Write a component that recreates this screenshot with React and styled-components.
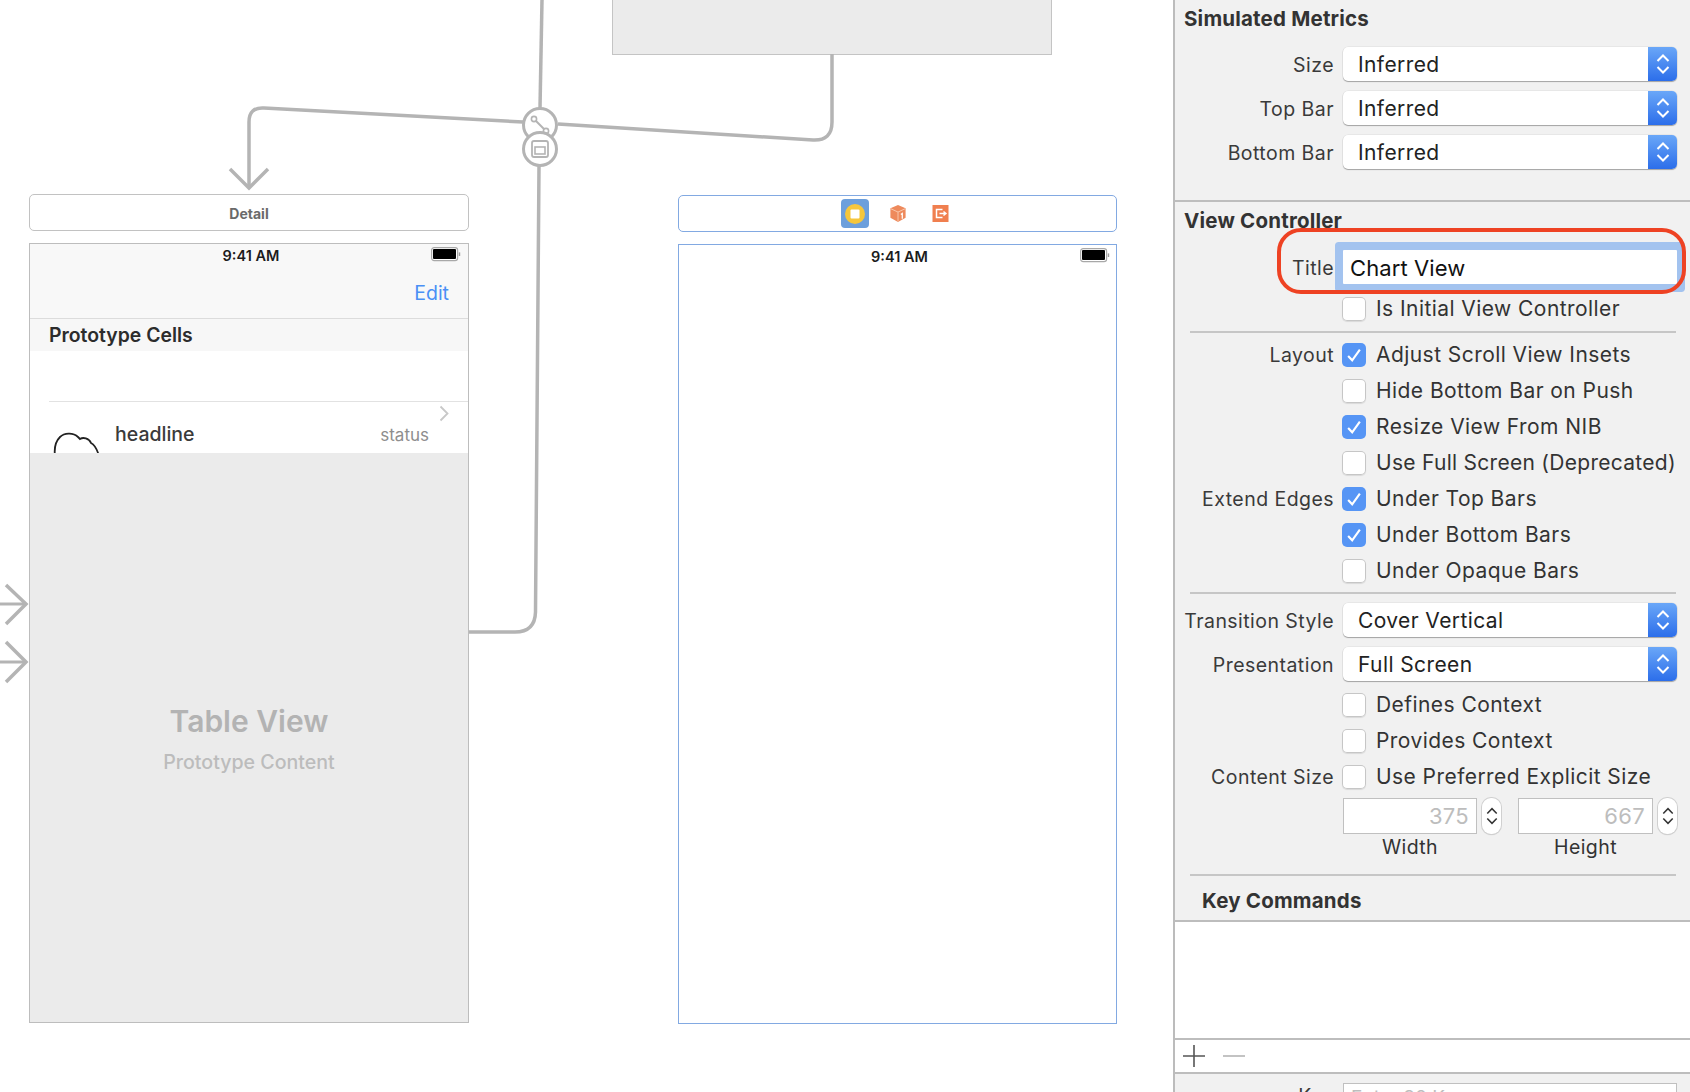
import React from 'react';
import styled, { createGlobalStyle } from 'styled-components';

const Global = createGlobalStyle`
  html, body { margin: 0; padding: 0; background: #fff; }
  body { font-family: Inter, "Open Sans", "Liberation Sans", sans-serif; }
  #root { width: 1690px; height: 1092px; overflow: hidden; }
  * { box-sizing: border-box; }
`;

const Page = styled.div`
  display: flex;
  width: 1690px;
  height: 1092px;
  overflow: hidden;
`;

/* ---------- free canvas ---------- */
const Canvas = styled.div`
  position: relative;
  width: 1173px;
  flex: none;
  background: #fff;
`;

const Wires = styled.svg`
  position: absolute;
  inset: 0;
  width: 1173px;
  height: 1092px;
`;

const GreyBlock = styled.div`
  position: absolute;
  left: 612px;
  top: -2px;
  width: 440px;
  height: 57px;
  background: #ebebeb;
  border: 1px solid #c4c4c4;
`;

const TitleBar = styled.div`
  position: absolute;
  left: ${p => p.$left}px;
  top: ${p => p.$top}px;
  width: ${p => p.$width}px;
  height: 37px;
  border: 1px solid ${p => (p.$selected ? '#82a9e2' : '#c2c2c2')};
  border-radius: 5px;
  background: #fff;
  display: flex;
  align-items: center;
  justify-content: center;
`;

const SceneName = styled.span`
  font-size: 14px;
  font-weight: 700;
  color: #6a6a6a;
  position: relative;
  top: 1px;
`;

const Scene = styled.div`
  position: absolute;
  left: ${p => p.$left}px;
  top: ${p => p.$top}px;
  width: ${p => p.$width}px;
  height: 780px;
  display: flex;
  flex-direction: column;
  background: #fff;
  border: 1px solid ${p => (p.$selected ? '#82a9e2' : '#bdbdbd')};
`;

const NavBar = styled.div`
  height: 75px;
  flex: none;
  background: ${p => (p.$plain ? '#fff' : '#f8f8f8')};
  border-bottom: 1px solid ${p => (p.$plain ? 'transparent' : '#dcdcdc')};
  display: flex;
  flex-direction: column;
`;

const StatusBar = styled.div`
  position: relative;
  height: 22px;
  display: flex;
  align-items: center;
  justify-content: center;
  padding-left: 4px;
`;

const Time = styled.span`
  font-size: 14.5px;
  font-weight: 600;
  color: #1c1c1c;
`;

const BatteryIcon = styled.svg`
  position: absolute;
  right: ${p => (p.$plain ? '6px' : '7px')};
  top: 3px;
`;

const NavActions = styled.div`
  display: flex;
  justify-content: flex-end;
  padding: 15px 19px 0 0;
`;

const EditLink = styled.span`
  color: #4a90f5;
  font-size: 19.5px;
  line-height: 24px;
`;

const SectionHeader = styled.div`
  height: 32px;
  flex: none;
  background: #f7f7f7;
  padding-left: 19px;
  display: flex;
  align-items: center;
  font-size: 19.4px;
  font-weight: 600;
  color: #2c2c2c;
`;

const BlankCell = styled.div`
  height: 51px;
  flex: none;
  background: #fff;
  margin-left: 19px;
  border-bottom: 1px solid #e2e2e2;
`;

const Cell = styled.div`
  position: relative;
  height: 51px;
  flex: none;
  display: flex;
  overflow: hidden;
  background: #fff;
  padding: 19px 0 0 85px;
`;

const CloudIcon = styled.svg`
  position: absolute;
  left: 23px;
  top: 30px;
`;

const Headline = styled.span`
  font-size: 19.5px;
  font-weight: 500;
  line-height: 26px;
  color: #3a3a3a;
`;

const CellStatus = styled.span`
  margin-left: auto;
  margin-right: 39px;
  margin-top: 2px;
  font-size: 17px;
  line-height: 24px;
  color: #8e8e8e;
`;

const CellChevron = styled.svg`
  position: absolute;
  right: 19px;
  top: 3px;
`;

const TablePlaceholder = styled.div`
  flex: 1;
  background: #ebebeb;
  display: flex;
  flex-direction: column;
  align-items: center;
  padding-top: 250px;
`;

const TableTitle = styled.div`
  font-size: 30px;
  font-weight: 600;
  line-height: 36px;
  color: #b3b3b3;
`;

const TableSub = styled.div`
  margin-top: 11px;
  font-size: 19.6px;
  font-weight: 500;
  line-height: 24px;
  color: #bcbcbc;
`;

const IconSlot = styled.div`
  width: 43px;
  display: flex;
  align-items: center;
  justify-content: center;
`;

const IconSelected = styled.div`
  width: 28px;
  height: 29px;
  border-radius: 4px;
  background: #6c9fdc;
  display: flex;
  align-items: center;
  justify-content: center;
`;

const IconSvg = styled.svg`
  display: block;
`;

/* ---------- inspector ---------- */
const Inspector = styled.aside`
  flex: 1;
  min-width: 0;
  background: #f1f1f1;
  border-left: 2px solid #bcbcbc;
  display: flex;
  flex-direction: column;
  color: #333;
  font-size: 20px;
`;

const Section = styled.section`
  flex: none;
  height: ${p => p.$height}px;
  padding: 0 13px 0 10px;
  border-bottom: ${p => (p.$rule ? '2px solid #bdbdbd' : 'none')};
`;

const Heading = styled.h3`
  margin: 0 0 0 -1px;
  height: ${p => p.$height || 36}px;
  display: flex;
  align-items: center;
  padding-left: ${p => p.$indent || 0}px;
  font-size: 20.5px;
  font-weight: 700;
  letter-spacing: 0.2px;
  color: #333;
`;

const Row = styled.div`
  display: grid;
  grid-template-columns: 149px minmax(0, 1fr);
  column-gap: 9px;
  align-items: center;
  height: ${p => p.$height || 34}px;
  margin-top: ${p => p.$top || 0}px;
`;

const Label = styled.label`
  text-align: right;
  white-space: nowrap;
  font-size: 19.5px;
  line-height: 24px;
  letter-spacing: 0.45px;
  color: #3a3a3a;
  justify-self: end;
  margin-top: ${p => (p.$nudge ? '2px' : '0')};
`;

const SelectBox = styled.div`
  height: 34px;
  border-radius: 5px;
  background: #fff;
  box-shadow: 0 0 0 0.5px rgba(0, 0, 0, 0.08), 0 1px 1px rgba(0, 0, 0, 0.3);
  display: flex;
  align-items: center;
  justify-content: space-between;
  padding-left: 15px;
  font-size: 21px;
  letter-spacing: 0.4px;
  color: #222;
  overflow: hidden;
`;

const SelectArrows = styled.div`
  width: 29px;
  height: 34px;
  flex: none;
  background: linear-gradient(#6aa7f8, #2c6eea);
  display: flex;
  align-items: center;
  justify-content: center;
`;

const TitleField = styled.div`
  position: relative;
  height: 34px;
  background: #fff;
  box-shadow: 0 0 0 8px #a3c3ef;
  border-radius: 1px;
  padding: 1px 0 0 7px;
  display: flex;
  align-items: center;
  font-size: 22px;
  letter-spacing: 0.1px;
  color: #111;
`;

const Callout = styled.div`
  position: absolute;
  left: -66px;
  top: -22px;
  width: 409px;
  height: 66px;
  border: 4px solid #ee4223;
  border-radius: 24px;
  pointer-events: none;
`;

const CheckRow = styled.div`
  display: flex;
  align-items: center;
  gap: 10px;
  margin-left: -1px;
  font-size: 21px;
  letter-spacing: ${p => (p.$tight ? '0.28px' : '0.44px')};
  color: #333;
  white-space: nowrap;
`;

const Box = styled.span`
  width: 24px;
  height: 24px;
  flex: none;
  border-radius: 5px;
  display: flex;
  align-items: center;
  justify-content: center;
  background: ${p => (p.$on ? '#5695f5' : '#fff')};
  box-shadow: ${p => (p.$on ? 'none' : 'inset 0 0 0 1px #c6c6c6, 0 1px 1px rgba(0,0,0,.1)')};
`;

const Rule = styled.hr`
  margin: ${p => p.$top || 0}px 0 0 5px;
  width: 486px;
  height: 2px;
  border: 0;
  background: #c6c6c6;
`;

const SizeFields = styled.div`
  display: flex;
  align-items: flex-start;
`;

const SizeColumn = styled.div`
  display: flex;
  flex-direction: column;
  margin-right: ${p => p.$gap || 0}px;
`;

const SizeControls = styled.div`
  display: flex;
  gap: 5px;
`;

const NumberField = styled.div`
  width: ${p => p.$width}px;
  height: 36px;
  background: #fff;
  border: 1px solid #c0c0c0;
  display: flex;
  align-items: center;
  justify-content: flex-end;
  padding: 1px 7px 0 0;
  font-size: 22px;
  letter-spacing: 0.3px;
  color: #bdbdbd;
`;

const Stepper = styled.div`
  width: 19px;
  height: 36px;
  background: #fff;
  border-radius: 9px;
  box-shadow: 0 0 0 1px #d0d0d0, 0 1px 1px rgba(0, 0, 0, 0.2);
  display: flex;
  align-items: center;
  justify-content: center;
`;

const SizeCaption = styled.div`
  width: ${p => p.$width}px;
  text-align: center;
  font-size: 19.5px;
  line-height: 24px;
  letter-spacing: 0.4px;
  margin-top: 1px;
  color: #333;
`;

const ListArea = styled.div`
  flex: none;
  height: 118px;
  background: #fff;
  border-top: 2px solid #bdbdbd;
`;

const ListBar = styled.div`
  flex: none;
  height: 36px;
  background: #fff;
  border-top: 2px solid #bdbdbd;
  border-bottom: 2px solid #bdbdbd;
  display: flex;
  align-items: center;
  padding-left: 8px;
  gap: 18px;
`;

const KeySection = styled.div`
  padding: 9px 13px 0 10px;
`;

const KeyField = styled.div`
  height: 34px;
  background: #fff;
  border: 1px solid #c0c0c0;
  padding: 2px 0 0 7px;
  font-size: 19px;
  line-height: 24px;
  color: #bdbdbd;
`;

const KeyLabel = styled(Label)`
  align-self: start;
  margin-top: 1px;
`;

/* ---------- small drawings ---------- */
const Battery = ({ plain }) => (
  <BatteryIcon $plain={plain} width="30" height="15" viewBox="0 0 30 15">
    <rect x="0.6" y="0.6" width="26" height="13" rx="2.6" fill="#fff" stroke="#a8a8a8" strokeWidth="1.2" />
    <rect x="2" y="2" width="23" height="10" rx="1" fill="#000" />
    <rect x="27.8" y="5.4" width="1.4" height="3.6" fill="#9c9c9c" />
  </BatteryIcon>
);

const Updown = ({ w = 14, h = 22, color = '#fff', sw = 2 }) => (
  <svg width={w} height={h} viewBox="0 0 14 22" fill="none" stroke={color} strokeWidth={sw}>
    <path d="M1.5 8 7 2.5 12.5 8" />
    <path d="M1.5 14 7 19.5 12.5 14" />
  </svg>
);

const Select = ({ children }) => (
  <SelectBox>
    {children}
    <SelectArrows>
      <Updown />
    </SelectArrows>
  </SelectBox>
);

const Check = ({ on, tight, children }) => (
  <CheckRow $tight={tight}>
    <Box $on={on}>
      {on && (
        <svg width="16" height="16" viewBox="0 0 15 15" fill="none" stroke="#fff" strokeWidth="2">
          <path d="M2 8.5 5.8 12.5 13 2.5" />
        </svg>
      )}
    </Box>
    {children}
  </CheckRow>
);

export default function App() {
  return (
    <Page>
      <Global />
      <Canvas>
        <GreyBlock />
        <Wires viewBox="0 0 1173 1092" fill="none">
          <g stroke="#b4b4b4" strokeWidth="3.5">
            <path d="M832 54V122Q832 141 813 140L558 124" />
            <path d="M523 122 264 108Q249 107 249 122V186" />
            <path d="M230 169 249 188 268 169" />
            <path d="M542 0 540 108" />
            <path d="M539 166 535.5 612Q535 632 515 632H469" />
            <path d="M0 604H26" strokeWidth="3" />
            <path d="M6 585 26 604 6 624" />
            <path d="M0 662H26" strokeWidth="3" />
            <path d="M6 642 26 662 6 682" />
          </g>
          <g stroke="#b4b4b4" strokeWidth="3" fill="#fff">
            <circle cx="540" cy="125" r="16.5" />
            <circle cx="540" cy="149" r="16.5" />
          </g>
          <g stroke="#b4b4b4" fill="none">
            <circle cx="534" cy="119" r="2.6" strokeWidth="1.6" />
            <circle cx="546" cy="131" r="2.6" strokeWidth="1.6" />
            <path d="M536 121 544 129" strokeWidth="2" />
            <rect x="532" y="141" width="16" height="16" rx="2" strokeWidth="1.8" />
            <rect x="535" y="147" width="10" height="7" strokeWidth="1.6" />
          </g>
        </Wires>

        <TitleBar $left={29} $top={194} $width={440}>
          <SceneName>Detail</SceneName>
        </TitleBar>
        <Scene $left={29} $top={243} $width={440}>
          <NavBar>
            <StatusBar>
              <Time>9:41 AM</Time>
              <Battery />
            </StatusBar>
            <NavActions>
              <EditLink>Edit</EditLink>
            </NavActions>
          </NavBar>
          <SectionHeader>Prototype Cells</SectionHeader>
          <BlankCell />
          <Cell>
            <CloudIcon width="50" height="24" viewBox="0 0 50 24" fill="none" stroke="#222" strokeWidth="1.8">
              <path d="M2 24C1 16 3 9 7 5 11 1 20 0 25 5L27 7C30 5 36 6 38 11 42 13 44 17 46 24" />
            </CloudIcon>
            <Headline>headline</Headline>
            <CellStatus>status</CellStatus>
            <CellChevron width="10" height="17" viewBox="0 0 10 17" fill="none" stroke="#c8c8c8" strokeWidth="1.8">
              <path d="M1.5 1.5 8.5 8.5 1.5 15.5" />
            </CellChevron>
          </Cell>
          <TablePlaceholder>
            <TableTitle>Table View</TableTitle>
            <TableSub>Prototype Content</TableSub>
          </TablePlaceholder>
        </Scene>

        <TitleBar $left={678} $top={195} $width={439} $selected>
          <IconSlot>
            <IconSelected>
              <IconSvg width="22" height="22" viewBox="0 0 22 22">
                <circle cx="11" cy="11" r="10" fill="#f5c63c" />
                <rect x="6.5" y="6.5" width="9" height="9" rx="1" fill="#fff" />
              </IconSvg>
            </IconSelected>
          </IconSlot>
          <IconSlot>
            <IconSvg width="18" height="19" viewBox="0 0 18 20">
              <path d="M9 1 17 4.5V14.5L9 19 1 14.5V4.5Z" fill="#ee8a5c" />
              <path d="M1.5 5 9 8.5 16.5 5M9 8.5V18.5" stroke="#f9c9ae" strokeWidth="1" fill="none" />
              <path d="M12 11 13.5 10V15.5" stroke="#fff" strokeWidth="1.3" fill="none" />
            </IconSvg>
          </IconSlot>
          <IconSlot>
            <IconSvg width="17" height="17" viewBox="0 0 16 17">
              <rect x="0" y="0" width="16" height="17" fill="#f07f4f" />
              <path d="M10 4.5H4V12.5H10" stroke="#fff" strokeWidth="1.5" fill="none" />
              <path d="M7 8.5H13M11 6.5 13.5 8.5 11 10.5" stroke="#fff" strokeWidth="1.4" fill="none" />
            </IconSvg>
          </IconSlot>
        </TitleBar>
        <Scene $left={678} $top={244} $width={439} $selected>
          <NavBar $plain>
            <StatusBar $plain>
              <Time>9:41 AM</Time>
              <Battery plain />
            </StatusBar>
          </NavBar>
        </Scene>
      </Canvas>

      <Inspector>
        <Section $height={202} $rule>
          <Heading>Simulated Metrics</Heading>
          <Row $top={11}>
            <Label $nudge>Size</Label>
            <Select>Inferred</Select>
          </Row>
          <Row $top={10}>
            <Label $nudge>Top Bar</Label>
            <Select>Inferred</Select>
          </Row>
          <Row $top={10}>
            <Label $nudge>Bottom Bar</Label>
            <Select>Inferred</Select>
          </Row>
        </Section>

        <Section $height={718}>
          <Heading>View Controller</Heading>
          <Row $top={12}>
            <Label $nudge>Title</Label>
            <TitleField>
              Chart View
              <Callout />
            </TitleField>
          </Row>
          <Row $top={12} $height={24}>
            <span />
            <Check>Is Initial View Controller</Check>
          </Row>
          <Rule $top={11} />
          <Row $top={9} $height={24}>
            <Label>Layout</Label>
            <Check on>Adjust Scroll View Insets</Check>
          </Row>
          <Row $top={12} $height={24}>
            <span />
            <Check>Hide Bottom Bar on Push</Check>
          </Row>
          <Row $top={12} $height={24}>
            <span />
            <Check on>Resize View From NIB</Check>
          </Row>
          <Row $top={12} $height={24}>
            <span />
            <Check tight>Use Full Screen (Deprecated)</Check>
          </Row>
          <Row $top={12} $height={24}>
            <Label>Extend Edges</Label>
            <Check on>Under Top Bars</Check>
          </Row>
          <Row $top={12} $height={24}>
            <span />
            <Check on>Under Bottom Bars</Check>
          </Row>
          <Row $top={12} $height={24}>
            <span />
            <Check>Under Opaque Bars</Check>
          </Row>
          <Rule $top={10} />
          <Row $top={9}>
            <Label $nudge>Transition Style</Label>
            <Select>Cover Vertical</Select>
          </Row>
          <Row $top={10}>
            <Label $nudge>Presentation</Label>
            <Select>Full Screen</Select>
          </Row>
          <Row $top={11} $height={24}>
            <span />
            <Check>Defines Context</Check>
          </Row>
          <Row $top={12} $height={24}>
            <span />
            <Check>Provides Context</Check>
          </Row>
          <Row $top={12} $height={24}>
            <Label>Content Size</Label>
            <Check>Use Preferred Explicit Size</Check>
          </Row>
          <Row $top={9} $height={62}>
            <span />
            <SizeFields>
              <SizeColumn $gap={17}>
                <SizeControls>
                  <NumberField $width={134}>375</NumberField>
                  <Stepper>
                    <Updown w={12} h={24} color="#333" sw={1.8} />
                  </Stepper>
                </SizeControls>
                <SizeCaption $width={134}>Width</SizeCaption>
              </SizeColumn>
              <SizeColumn>
                <SizeControls>
                  <NumberField $width={135}>667</NumberField>
                  <Stepper>
                    <Updown w={12} h={24} color="#333" sw={1.8} />
                  </Stepper>
                </SizeControls>
                <SizeCaption $width={135}>Height</SizeCaption>
              </SizeColumn>
            </SizeFields>
          </Row>
          <Rule $top={15} />
          <Heading $height={48} $indent={18}>Key Commands</Heading>
        </Section>

        <ListArea />
        <ListBar>
          <svg width="22" height="22" viewBox="0 0 22 22" stroke="#555" strokeWidth="1.6">
            <path d="M0 11H22M11 0V22" />
          </svg>
          <svg width="22" height="22" viewBox="0 0 22 22" stroke="#b4b4b4" strokeWidth="1.6">
            <path d="M0 11H22" />
          </svg>
        </ListBar>
        <KeySection>
          <Row>
            <KeyLabel>Key</KeyLabel>
            <KeyField>Enter 30 Key</KeyField>
          </Row>
        </KeySection>
      </Inspector>
    </Page>
  );
}
